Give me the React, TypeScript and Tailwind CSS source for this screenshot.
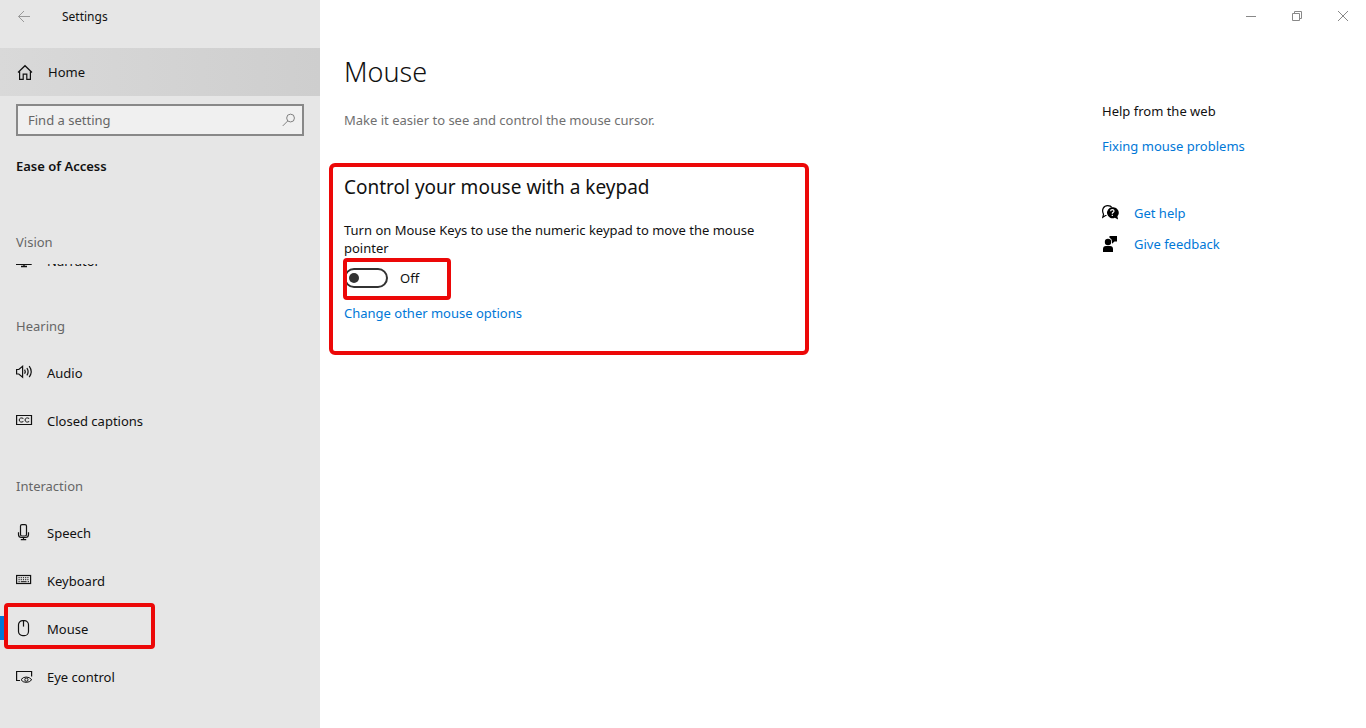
import { useState } from 'react';
import type { ReactNode } from 'react';

const iconProps = {
  width: 18,
  height: 18,
  viewBox: '0 0 18 18',
  fill: 'none',
  stroke: 'currentColor',
  strokeWidth: 1.2,
  'aria-hidden': true
};

const HomeIcon = () => (
  <svg {...iconProps}>
    <path d="M2 9.500 9 2.700 16 9.500M3.600 8.300v8h3.600v-5.200h3.600v5.200h3.600v-8" />
  </svg>
);

const NarratorIcon = () => (
  <svg {...iconProps} strokeWidth={1.4}>
    <path d="M.6 2h14.400v10.200H.6zM8 12v2M5 14.500h6" />
  </svg>
);

const AudioIcon = () => (
  <svg {...iconProps}>
    <path d="M.6 5.500h2.200L6.600 2.200v11L2.800 10H.6z" />
    <path d="M8.600 5.600q1.300 2.100 0 4.200M10.900 4q2.400 3.700 0 7.400M13.200 2.200q4 5.500 0 11" />
  </svg>
);

const CaptionsIcon = () => (
  <svg {...iconProps}>
    <path d="M.6 3.500h14.900v9H.6z" />
    <path d="M7.400 6.500C5.400 5.200 3.200 6.200 3.200 8s2.200 2.800 4.200 1.500M13.200 6.500C11.200 5.200 9 6.200 9 8s2.200 2.800 4.200 1.500" strokeWidth={1} />
  </svg>
);

const SpeechIcon = () => (
  <svg {...iconProps}>
    <rect x="4.500" y=".6" width="6" height="11.400" rx="1.500" />
    <path d="M2.500 8.300v2.200q0 3 3 3h4q3 0 3-3V8.300M7.500 13.500v2M4.800 15.700h5.400" />
  </svg>
);

const KeyboardIcon = () => (
  <svg {...iconProps}>
    <rect x=".6" y="3.500" width="14" height="8" />
    <path d="M2.500 5.700h10.500M2.500 7.700h10.500" strokeDasharray="1.200 1" strokeWidth={1} />
    <path d="M2.500 9.700h1.200M4.800 9.700h5.800M11.700 9.700h1.300" strokeWidth={1} />
  </svg>
);

const MouseIcon = () => (
  <svg {...iconProps}>
    <rect x="2.500" y=".6" width="10" height="15" rx="4.200" />
    <path d="M7.500 .6v6" />
  </svg>
);

const EyeIcon = () => (
  <svg {...iconProps}>
    <path d="M4 12.500H.6V3.500h15v5" />
    <path d="M5 11.700q2-2.700 5.200-2.700t5.600 2.700q-2.200 2.700-5.600 2.700T5 11.700z" strokeWidth={1} />
    <circle cx="10.400" cy="11.700" r="1.600" strokeWidth={1} />
  </svg>
);

const GetHelpIcon = () => (
  <svg {...iconProps}>
    <path d="M4.500 11.500H3.500L.8 13.300l.7-3C-.8 5.500 1.800 1.600 5.700 1.600c2 0 3.500.6 4.300 1.900" />
    <path d="M10.300 3.300a5.500 5.500 0 1 0 2.500 10.500l3.300 1.800-.7-3.300a5.500 5.500 0 0 0-5.100-9z" fill="currentColor" stroke="none" />
    <path d="M8.600 7.300q0-1.700 1.700-1.700T12 7.100q0 .8-.9 1.300-.8.400-.8 1.300M10.300 10.800V12" stroke="white" />
  </svg>
);

const FeedbackIcon = () => (
  <svg {...iconProps} fill="currentColor" stroke="none">
    <circle cx="6" cy="7" r="3.200" />
    <path d="M1 17v-3Q1 11 4 11h4q3 0 3 3v3zM7.500 1H15v5.500h-2.500L10 8.800V6.500Q10 4 7.500 2.800z" />
  </svg>
);

const visionItems = [{ label: 'Narrator', icon: <NarratorIcon /> }];

const hearingItems = [
  { label: 'Audio', icon: <AudioIcon /> },
  { label: 'Closed captions', icon: <CaptionsIcon /> }
];

const interactionItems = [
  { label: 'Speech', icon: <SpeechIcon /> },
  { label: 'Keyboard', icon: <KeyboardIcon /> },
  { label: 'Mouse', icon: <MouseIcon />, active: true },
  { label: 'Eye control', icon: <EyeIcon /> }
];

type NavItemProps = { label: string; icon: ReactNode; active?: boolean };

const NavItem = ({ label, icon, active }: NavItemProps) => (
  <li className="relative shrink-0">
    <a href="#" className="flex h-12 items-center gap-[13px] pl-4">
      {icon}
      <span>{label}</span>
    </a>
    {active && (
      <>
        <span className="absolute left-0 top-[11px] h-6 w-[5px] bg-[#0078d7]" />
        <span className="absolute left-1 -top-0.5 h-[46px] w-[151px] rounded-sm border-4 border-[#ec0808]" />
      </>
    )}
  </li>
);

const App = () => {
  const [search, setSearch] = useState('');
  const [mouseKeys, setMouseKeys] = useState(false);

  return (
    <div className="flex min-h-screen bg-white font-['Noto_Sans','Open_Sans',sans-serif] text-[13px] leading-5 text-[#111]">
      {/* Sidebar */}
      <nav className="w-80 shrink-0 bg-[#e6e6e6]">
        <div className="flex h-12 items-start">
          <div className="flex h-[33px] items-center gap-7 pl-4">
            <button aria-label="Back" className="text-[#999]">
              <svg {...iconProps} strokeWidth={1}>
                <path d="M14 8.500H2.500M8 3 2.500 8.500 8 14" />
              </svg>
            </button>
            <span className="text-xs">Settings</span>
          </div>
        </div>

        <a href="#" className="flex h-12 items-center gap-[14px] bg-linear-to-r from-[#d9d9d9] to-[#cecece] pl-4">
          <HomeIcon />
          <span>Home</span>
        </a>

        <div className="px-4 pt-2">
          <div className="flex h-8 items-center border-2 border-[#888] bg-[#f0f0f0] pl-[10px] pr-1.5">
            <input
              type="text"
              aria-label="Find a setting"
              placeholder="Find a setting"
              className="min-w-0 flex-1 bg-transparent outline-none placeholder:text-[#666]"
              value={search}
              onChange={(e) => setSearch(e.target.value)}
            />
            <svg {...iconProps} width={14} height={14} className="text-[#777]">
              <circle cx="11" cy="6.500" r="5" />
              <path d="M7.400 10.200 1 16.600" />
            </svg>
          </div>
        </div>

        <h2 className="flex h-[60px] items-center pl-4 font-semibold">Ease of Access</h2>

        <h3 className="flex h-[68px] items-end pb-3 pl-4 text-[#666]">Vision</h3>
        {/* Scrolled part of the list */}
        <ul className="flex h-[21px] flex-col justify-end overflow-hidden">
          {visionItems.map((item) => (
            <NavItem key={item.label} {...item} />
          ))}
        </ul>

        <h3 className="flex h-16 items-end pb-[13px] pl-4 text-[#666]">Hearing</h3>
        <ul>
          {hearingItems.map((item) => (
            <NavItem key={item.label} {...item} />
          ))}
        </ul>

        <h3 className="flex h-16 items-end pb-[13px] pl-4 text-[#666]">Interaction</h3>
        <ul>
          {interactionItems.map((item) => (
            <NavItem key={item.label} {...item} />
          ))}
        </ul>
      </nav>

      <div className="flex min-w-0 flex-1 flex-col">
        {/* Window controls */}
        <div className="flex h-8 justify-end text-[#888]">
          <button aria-label="Minimize" className="flex w-[46px] items-center justify-center">
            <svg width="10" height="10" viewBox="0 0 10 10" fill="none" stroke="currentColor">
              <path d="M0 5.500h10" />
            </svg>
          </button>
          <button aria-label="Restore" className="flex w-[46px] items-center justify-center">
            <svg width="10" height="10" viewBox="0 0 10 10" fill="none" stroke="currentColor">
              <path d="M.5 2.500h7v7h-7zM2.500 2.500v-2h7v7h-2" />
            </svg>
          </button>
          <button aria-label="Close" className="flex w-[46px] items-center justify-center">
            <svg width="10" height="10" viewBox="0 0 10 10" fill="none" stroke="currentColor">
              <path d="M0 0l10 10M10 0 0 10" />
            </svg>
          </button>
        </div>

        <div className="flex flex-1">
          <main className="min-w-0 flex-1 pl-6 pt-5">
            <h1 className="text-[27px] font-light leading-10">Mouse</h1>
            <p className="mt-[18px] text-[#707070]">Make it easier to see and control the mouse cursor.</p>

            <section className="-ml-[15px] mt-[33px] h-48 max-w-[480px] rounded-md border-4 border-[#ec0808] pl-[11px] pt-1.5">
              <h2 className="text-[19px] leading-7">Control your mouse with a keypad</h2>
              <p className="mt-5 max-w-[430px] leading-[18px]">
                Turn on Mouse Keys to use the numeric keypad to move the mouse pointer
              </p>
              <div className="relative mt-px flex h-[42px] items-center pb-[3px]">
                <label className="flex items-center gap-3">
                  <input
                    type="checkbox"
                    role="switch"
                    className="flex h-5 w-11 appearance-none items-center rounded-full border-2 border-[#333] px-[3px] before:size-[10px] before:rounded-full before:bg-[#333] checked:justify-end"
                    checked={mouseKeys}
                    onChange={(e) => setMouseKeys(e.target.checked)}
                  />
                  <span>{mouseKeys ? 'On' : 'Off'}</span>
                </label>
                <span className="pointer-events-none absolute -left-px top-0 h-[42px] w-[108px] rounded-sm border-4 border-[#ec0808]" />
              </div>
              <a href="#" className="mt-[3px] inline-block text-[#0078d7]">Change other mouse options</a>
            </section>
          </main>

          {/* Help links */}
          <aside className="w-[264px] shrink-0 pt-[69px]">
            <h2>Help from the web</h2>
            <a href="#" className="mt-[15px] block text-[#0078d7]">Fixing mouse problems</a>
            <div className="mt-[47px] flex flex-col gap-[11px]">
              <a href="#" className="flex items-center gap-[14px] text-[#0078d7]">
                <span className="text-black"><GetHelpIcon /></span>
                Get help
              </a>
              <a href="#" className="flex items-center gap-[14px] text-[#0078d7]">
                <span className="text-black"><FeedbackIcon /></span>
                Give feedback
              </a>
            </div>
          </aside>
        </div>
      </div>
    </div>
  );
};

export default App;
